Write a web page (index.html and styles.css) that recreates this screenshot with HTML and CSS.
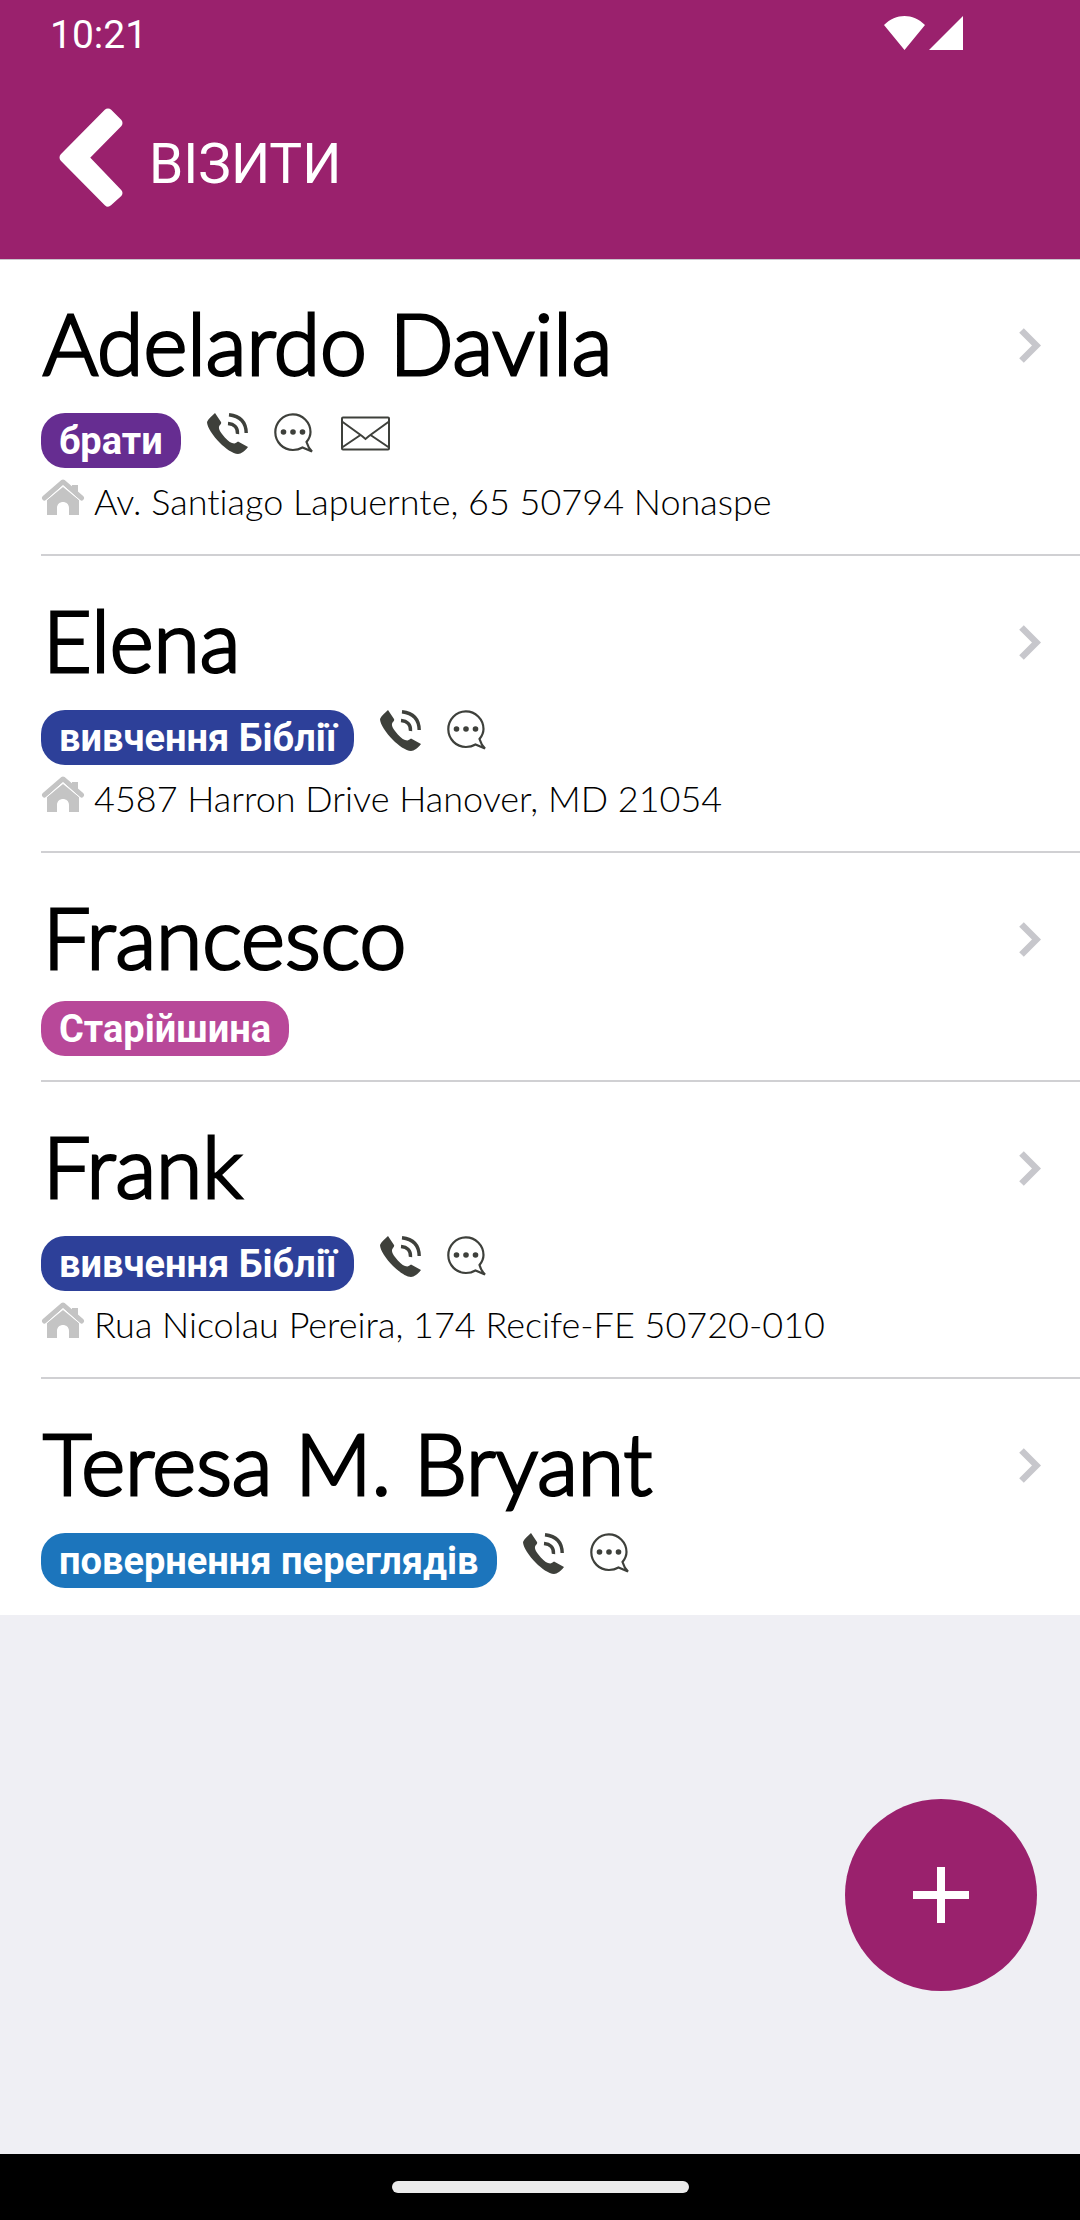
FILE: index.html
```html
<!DOCTYPE html>
<html lang="uk">
<head>
<meta charset="utf-8">
<meta name="viewport" content="width=device-width, initial-scale=1">
<title>Візити</title>
<link rel="stylesheet" href="styles.css">
</head>
<body>
<svg class="symbols" aria-hidden="true">
  <symbol id="phone" viewBox="0 0 41 41">
    <path d="M8 0L14 9C14.500 10 14 11 13 12C11 14 12 17 15 21C19 26 22 29 25 30C28 31 29 30 31 28.500L41 34C38 38 34 41 31 41C26 41 18 35 13 30C6 23 0 14 0 9C1 6 5 3 8 0Z" fill="#3e403b"/>
    <path d="M21 10.500C27 11 31 14.500 30.500 21M22 1.700C33 3 39 9 39.200 20" fill="none" stroke="#3e403b" stroke-width="3.400"/>
  </symbol>
  <symbol id="chat" viewBox="0 0 41 41">
    <path d="M32.500 29C35 26 36.500 23 36.500 19A17.600 17.800 0 1 0 19 37C23 37 26 36 28.500 34.500L38 38.500C35.500 36 33.500 32.500 32.500 29Z" fill="none" stroke="#3e403b" stroke-width="2.200"/>
    <g fill="#3e403b"><circle cx="9.500" cy="19" r="2.800"/><circle cx="19" cy="19" r="2.800"/><circle cx="28.500" cy="19" r="2.800"/></g>
  </symbol>
  <symbol id="mail" viewBox="0 0 49 34">
    <g fill="none" stroke="#3e403b" stroke-width="2"><rect x="1" y="1" width="47" height="32" rx="1"/><path d="M1 5L21 19.500L24.500 22.500L28 19.500L48 5M1 31L19.500 18.500M48 31L29.500 18.500"/></g>
  </symbol>
  <symbol id="home" viewBox="0 0 44 36">
    <path d="M3.500 19L22 3L40.500 19" fill="none" stroke="#c4c4c4" stroke-width="5" stroke-linecap="round" stroke-linejoin="round"/>
    <path d="M31 6H37V16L31 11ZM22 8L38 21V36H28V29C28 21 16 21 16 29V36H6V21Z" fill="#c4c4c4"/>
    <path d="M4 22.500L22 6.500L40 22.500" fill="none" stroke="#fff" stroke-width="1"/>
  </symbol>
  <symbol id="chevron" viewBox="0 0 22 35">
    <path d="M2.500 2.500L17.500 17.500L2.500 32.500" fill="none" stroke="#c7c7cc" stroke-width="6.500"/>
  </symbol>
</svg>

<header class="header">
  <div class="status">
    <span class="time">10:21</span>
    <svg class="signal" viewBox="0 0 80 34" aria-hidden="true"><path d="M0 9C12-3 29-3 41 9L20.500 34ZM45 34L79 0V34Z" fill="#fff"/></svg>
  </div>
  <div class="toolbar">
    <button class="back" type="button" aria-label="Назад">
      <svg viewBox="0 0 64 99" aria-hidden="true"><path d="M49 5L59 15L25 49.500L59 85L49 94L5 49.500Z" fill="#fff" stroke="#fff" stroke-width="9" stroke-linejoin="round"/></svg>
    </button>
    <h1 class="title">ВІЗИТИ</h1>
  </div>
</header>

<main class="main">
  <ul class="list">
    <li class="visit">
      <div class="info">
        <h2 class="name">Adelardo Davila</h2>
        <div class="meta"><span class="badge violet">брати</span><svg class="icon"><use href="#phone"/></svg><svg class="icon"><use href="#chat"/></svg><svg class="icon wide"><use href="#mail"/></svg></div>
        <div class="address"><svg class="home"><use href="#home"/></svg><span>Av. Santiago Lapuernte, 65 50794 Nonaspe</span></div>
      </div>
      <svg class="chevron"><use href="#chevron"/></svg>
    </li>
    <li class="visit">
      <div class="info">
        <h2 class="name">Elena</h2>
        <div class="meta"><span class="badge navy">вивчення Біблії</span><svg class="icon"><use href="#phone"/></svg><svg class="icon"><use href="#chat"/></svg></div>
        <div class="address"><svg class="home"><use href="#home"/></svg><span>4587 Harron Drive Hanover, MD 21054</span></div>
      </div>
      <svg class="chevron"><use href="#chevron"/></svg>
    </li>
    <li class="visit compact">
      <div class="info">
        <h2 class="name">Francesco</h2>
        <div class="meta"><span class="badge pink">Старійшина</span></div>
      </div>
      <svg class="chevron"><use href="#chevron"/></svg>
    </li>
    <li class="visit">
      <div class="info">
        <h2 class="name">Frank</h2>
        <div class="meta"><span class="badge navy">вивчення Біблії</span><svg class="icon"><use href="#phone"/></svg><svg class="icon"><use href="#chat"/></svg></div>
        <div class="address"><svg class="home"><use href="#home"/></svg><span>Rua Nicolau Pereira, 174 Recife-FE 50720-010</span></div>
      </div>
      <svg class="chevron"><use href="#chevron"/></svg>
    </li>
    <li class="visit">
      <div class="info">
        <h2 class="name">Teresa M. Bryant</h2>
        <div class="meta"><span class="badge blue">повернення переглядів</span><svg class="icon"><use href="#phone"/></svg><svg class="icon"><use href="#chat"/></svg></div>
      </div>
      <svg class="chevron"><use href="#chevron"/></svg>
    </li>
  </ul>
</main>

<button class="add" type="button" aria-label="Додати">
  <svg viewBox="0 0 56 56" aria-hidden="true"><path d="M28 0V56M0 28H56" stroke="#fff" stroke-width="8"/></svg>
</button>
<footer class="navbar"><span class="pill"></span></footer>
</body>
</html>
```

FILE: styles.css
```css
* { box-sizing: border-box; margin: 0; padding: 0; }
body {
  display: flex;
  flex-direction: column;
  min-height: 100vh;
  background: #efeff4;
  color: #000;
  font-family: Roboto, "Noto Sans", sans-serif;
}
svg { display: block; flex: none; }
button { border: 0; background: none; cursor: pointer; }
.symbols { position: absolute; width: 0; height: 0; }

.header {
  position: relative;
  background: #9a216d;
  color: #fff;
  box-shadow: 0 1px 0 #c8c7cc;
}
.status {
  display: flex;
  align-items: center;
  justify-content: space-between;
  height: 64px;
  padding: 2px 116px 0 50px;
}
.time {
  padding-top: 4px;
  font-size: 39px;
  line-height: 48px;
}
.signal { width: 80px; height: 34px; }
.toolbar {
  display: flex;
  align-items: center;
  height: 195px;
  padding: 0 59px 8px;
  gap: 26px;
}
.back svg { width: 64px; height: 99px; }
.title {
  padding-top: 12px;
  font-size: 55px;
  font-weight: 400;
  line-height: 64px;
}

.main { flex: 1; }
.list { list-style: none; background: #fff; padding-left: 41px; }
.visit {
  display: flex;
  align-items: flex-start;
  justify-content: space-between;
  padding: 33px 39px 29px 0;
  border-bottom: 2px solid #d0d0d3;
}
.visit:last-child { padding-bottom: 27px; border-bottom: 0; }
.name {
  padding-left: 2px;
  font-family: Lato, sans-serif;
  font-size: 84px;
  font-weight: 300;
  line-height: 102px;
  -webkit-text-stroke: 3px #000;
}
.meta { display: flex; align-items: flex-start; gap: 26px; padding-top: 19px; }
.compact { padding-bottom: 24px; }
.compact .meta { padding-top: 13px; }
.badge {
  padding: 1px 18px 0;
  border-radius: 24px;
  color: #fff;
  font-size: 38px;
  font-weight: 700;
  line-height: 54px;
}
.violet { background: #662d91; }
.navy { background: #2d4099; }
.pink { background: #b84899; }
.blue { background: #1c75bc; }
.icon { width: 41px; height: 41px; }
.wide { width: 49px; }
.address {
  display: flex;
  align-items: baseline;
  gap: 9px;
  padding-top: 9px;
  font-family: Lato, sans-serif;
  font-size: 36px;
  font-weight: 300;
  font-variant-ligatures: none;
  line-height: 48px;
}
.home { width: 44px; height: 36px; }
.chevron { width: 22px; height: 35px; margin-top: 36px; }

.add {
  position: fixed;
  right: 43px;
  bottom: 229px;
  display: flex;
  align-items: center;
  justify-content: center;
  width: 192px;
  height: 192px;
  border-radius: 50%;
  background: #9a216d;
}
.add svg { width: 56px; height: 56px; }
.navbar {
  display: flex;
  justify-content: center;
  align-items: center;
  height: 66px;
  background: #000;
}
.pill { width: 297px; height: 12px; border-radius: 6px; background: #ebebeb; }
```
